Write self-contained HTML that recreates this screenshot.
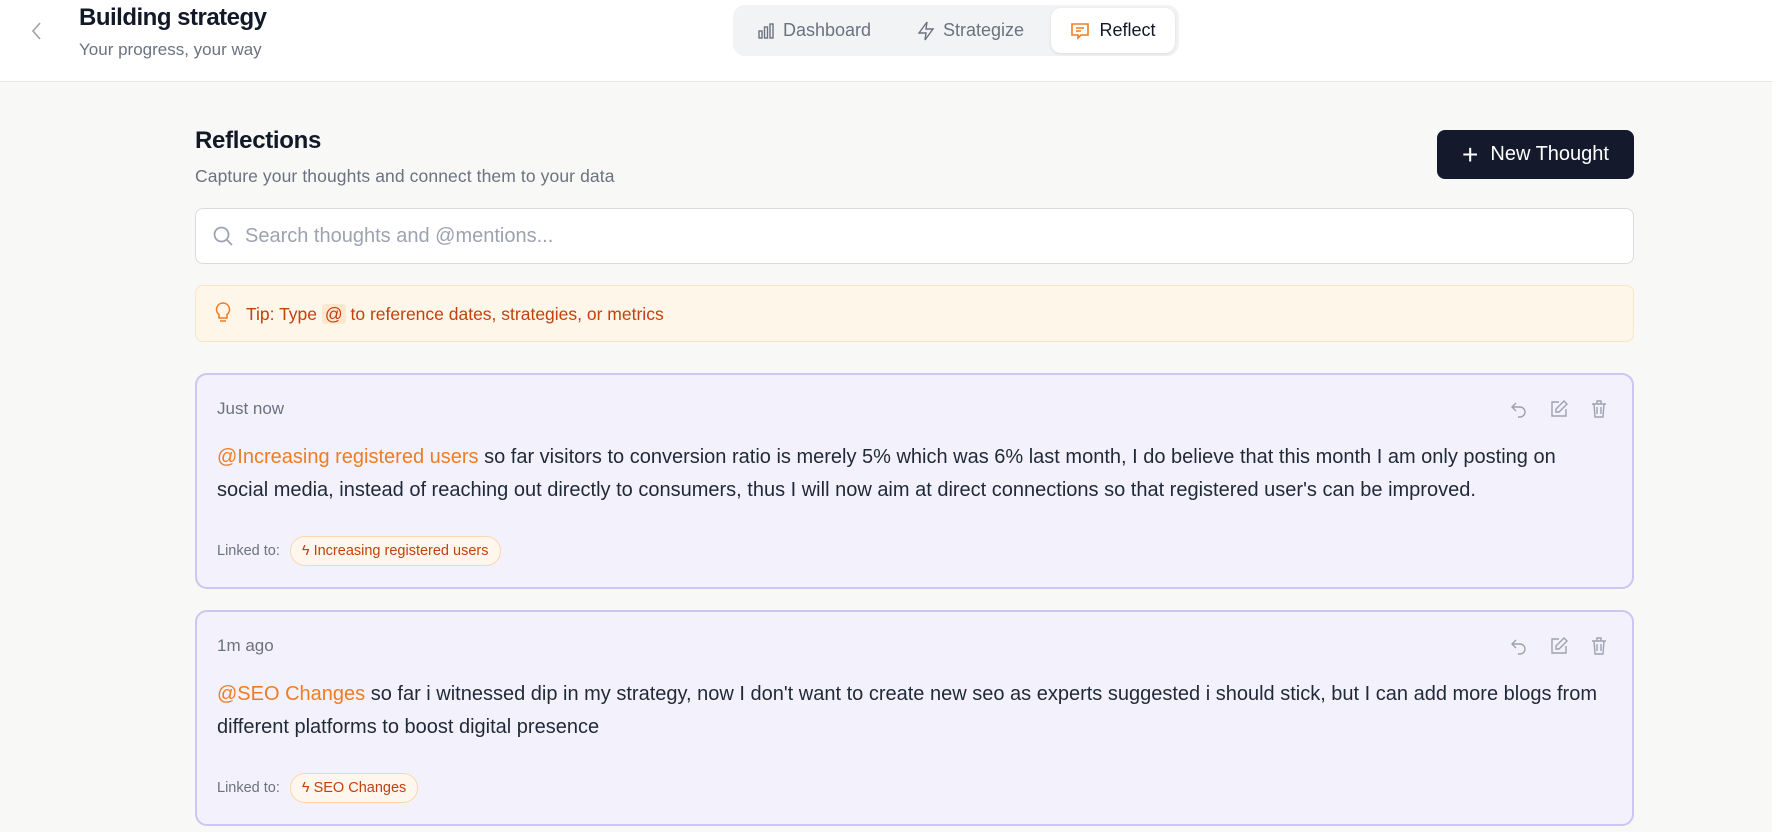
<!DOCTYPE html>
<html><head><meta charset="utf-8"><style>
*{box-sizing:border-box;margin:0;padding:0}
body{width:1772px;height:832px;overflow:hidden;background:#f8f8f6;font-family:"Liberation Sans",sans-serif;color:#111827;position:relative}
.hdr{position:absolute;left:0;top:0;width:1772px;height:82px;background:#fff;border-bottom:1px solid #e5e7eb}
.abs{position:absolute}
.tabs{left:733px;top:5px;width:446px;height:51px;background:#f1f3f5;border-radius:12px}
.tab{position:absolute;top:0;height:51px;font-size:18px;color:#6b7280;display:flex;align-items:center;gap:8px}
.active{left:318px;top:3px;width:124px;height:45px;background:#fff;border-radius:10px;box-shadow:0 1px 3px rgba(0,0,0,.1);display:flex;align-items:center;justify-content:center;gap:9px;color:#111827;font-size:18px;position:absolute}
.card{position:absolute;left:195px;width:1439px;background:#f3f1fb;border:2px solid #cdc6f2;border-radius:12px}
.time{position:absolute;left:20px;top:24px;font-size:17px;color:#6b7280}
.body{position:absolute;left:20px;top:66px;width:1410px;font-size:20px;line-height:33px;color:#1f2937;white-space:nowrap}
.m{color:#f07c22}
.linked{position:absolute;left:20px;font-size:14.5px;color:#6b7280;display:flex;align-items:center;gap:10px}
.chip{border:1px solid #fcd7ae;background:#fff7ed;color:#c2410c;border-radius:16px;padding:6px 11px;font-size:14.5px;display:flex;align-items:center;gap:5px}
.ic{position:absolute;top:24px}
</style></head><body>
<div class="hdr">
<svg class="abs" style="left:30px;top:20px" width="14" height="22" viewBox="0 0 14 22"><path d="M10 3L3 11l7 8" fill="none" stroke="#9ca3af" stroke-width="1.6"/></svg>
<div class="abs" style="left:79px;top:4px;font-size:24px;font-weight:bold;letter-spacing:-.5px">Building strategy</div>
<div class="abs" style="left:79px;top:40px;font-size:17px;color:#6b7280">Your progress, your way</div>
<div class="abs tabs">
<div class="tab" style="left:24px"><svg width="18" height="18" viewBox="0 0 18 18" fill="none" stroke="#6b7280" stroke-width="1.4"><rect x="2" y="9" width="3" height="7"/><rect x="7.5" y="5" width="3" height="11"/><rect x="13" y="2" width="3" height="14"/></svg>Dashboard</div>
<div class="tab" style="left:184px"><svg width="18" height="20" viewBox="0 0 18 20" fill="none" stroke="#6b7280" stroke-width="1.4"><path d="M10 1L2 12h7l-1 7 8-11H9z"/></svg>Strategize</div>
<div class="active"><svg width="20" height="20" viewBox="0 0 20 20" fill="none" stroke="#f07c22" stroke-width="1.6"><path d="M2 3h16v11H11l-3 3v-3H2z"/><path d="M6 7h8M6 10h5"/></svg>Reflect</div>
</div>
</div>
<div class="abs" style="left:195px;top:127px;font-size:24px;font-weight:bold;letter-spacing:-.3px">Reflections</div>
<div class="abs" style="left:195px;top:166px;font-size:17.5px;color:#6b7280;letter-spacing:.1px">Capture your thoughts and connect them to your data</div>
<div class="abs" style="left:1437px;top:130px;width:197px;height:49px;background:#141a2b;border-radius:8px;color:#fff;font-size:20px;display:flex;align-items:center;justify-content:center;gap:12px"><span style="font-size:28px;font-weight:300;line-height:1">+</span>New Thought</div>
<div class="abs" style="left:195px;top:208px;width:1439px;height:56px;background:#fff;border:1px solid #d9dbe0;border-radius:8px"><svg class="abs" style="left:16px;top:16px" width="22" height="22" viewBox="0 0 22 22" fill="none" stroke="#9ca3af" stroke-width="1.8"><circle cx="9.5" cy="9.5" r="7"/><path d="M15 15l5 5"/></svg><div class="abs" style="left:49px;top:16px;font-size:20px;color:#9ca3af">Search thoughts and @mentions...</div></div>
<div class="abs" style="left:195px;top:285px;width:1439px;height:57px;background:#fff6ea;border:1px solid #fde3c8;border-radius:8px"><svg class="abs" style="left:17px;top:15px" width="20" height="24" viewBox="0 0 20 24" fill="none" stroke="#f07c22" stroke-width="1.6"><path d="M10 2a6.5 6.5 0 0 0-4 11.6V17h8v-3.4A6.5 6.5 0 0 0 10 2zM7 20h6"/></svg><div class="abs" style="left:50px;top:18px;font-size:17.5px;color:#c2410c">Tip: Type <span style="background:#fde7cf;padding:0 3px;border-radius:3px">@</span> to reference dates, strategies, or metrics</div></div>

<div class="card" style="top:373px;height:216px">
<div class="time">Just now</div>
<svg class="ic" style="left:1312px" width="20" height="20" viewBox="0 0 20 20" fill="none" stroke="#9ca3af" stroke-width="1.4"><path d="M7 4L3 8l4 4M3 8h8a5 5 0 0 1 0 10H9"/></svg>
<svg class="ic" style="left:1352px" width="20" height="20" viewBox="0 0 20 20" fill="none" stroke="#9ca3af" stroke-width="1.4"><path d="M10 3H3v14h14v-7M15 2l3 3-8 8H7v-3z"/></svg>
<svg class="ic" style="left:1392px" width="20" height="20" viewBox="0 0 20 20" fill="none" stroke="#9ca3af" stroke-width="1.4"><path d="M3 5h14M8 5V2h4v3M5 5l1 13h8l1-13M8 8v7M12 8v7"/></svg>
<div class="body"><span class="m">@Increasing registered users</span> so far visitors to conversion ratio is merely 5% which was 6% last month, I do believe that this month I am only posting on<br>social media, instead of reaching out directly to consumers, thus I will now aim at direct connections so that registered user's can be improved.</div>
<div class="linked" style="top:161px">Linked to: <span class="chip">ϟ Increasing registered users</span></div>
</div>

<div class="card" style="top:610px;height:216px">
<div class="time">1m ago</div>
<svg class="ic" style="left:1312px" width="20" height="20" viewBox="0 0 20 20" fill="none" stroke="#9ca3af" stroke-width="1.4"><path d="M7 4L3 8l4 4M3 8h8a5 5 0 0 1 0 10H9"/></svg>
<svg class="ic" style="left:1352px" width="20" height="20" viewBox="0 0 20 20" fill="none" stroke="#9ca3af" stroke-width="1.4"><path d="M10 3H3v14h14v-7M15 2l3 3-8 8H7v-3z"/></svg>
<svg class="ic" style="left:1392px" width="20" height="20" viewBox="0 0 20 20" fill="none" stroke="#9ca3af" stroke-width="1.4"><path d="M3 5h14M8 5V2h4v3M5 5l1 13h8l1-13M8 8v7M12 8v7"/></svg>
<div class="body"><span class="m">@SEO Changes</span> so far i witnessed dip in my strategy, now I don't want to create new seo as experts suggested i should stick, but I can add more blogs from<br>different platforms to boost digital presence</div>
<div class="linked" style="top:161px">Linked to: <span class="chip">ϟ SEO Changes</span></div>
</div>
</body></html>
